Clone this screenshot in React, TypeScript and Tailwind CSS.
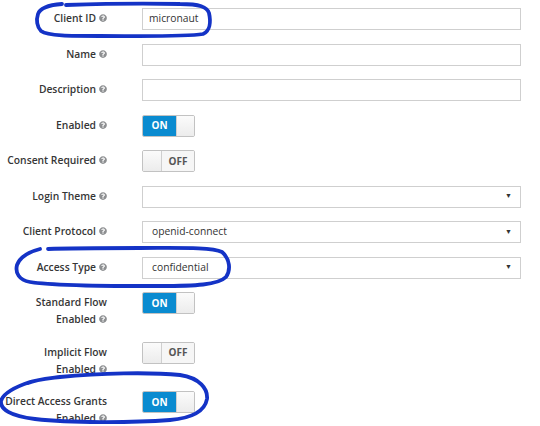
import { FaQuestionCircle } from 'react-icons/fa';

type Field =
  | { kind: 'text'; label: string; value?: string }
  | { kind: 'select'; label: string; value?: string }
  | { kind: 'toggle'; label: string; on: boolean; line2?: string };

const FIELDS: Field[] = [
  { kind: 'text', label: 'Client ID', value: 'micronaut' },
  { kind: 'text', label: 'Name' },
  { kind: 'text', label: 'Description' },
  { kind: 'toggle', label: 'Enabled', on: true },
  { kind: 'toggle', label: 'Consent Required', on: false },
  { kind: 'select', label: 'Login Theme' },
  { kind: 'select', label: 'Client Protocol', value: 'openid-connect' },
  { kind: 'select', label: 'Access Type', value: 'confidential' },
  { kind: 'toggle', label: 'Standard Flow', line2: 'Enabled', on: true },
  { kind: 'toggle', label: 'Implicit Flow', line2: 'Enabled', on: false },
  { kind: 'toggle', label: 'Direct Access Grants', line2: 'Enabled', on: true },
];

function Help() {
  return <FaQuestionCircle className="inline-block ml-[3px] -mt-[2px] w-[8px] h-[8px] text-[#8d8f91] align-middle" />;
}

function Toggle({ on }: { on: boolean }) {
  return (
    <div className="flex w-[53px] h-[22px] border border-[#c2c2c2] rounded-[2px] overflow-hidden text-[10px] font-bold">
      {on ? (
        <>
          <div className="w-[33px] bg-[#0a8bd0] text-white flex items-center justify-center">ON</div>
          <div className="flex-1 bg-gradient-to-b from-[#fbfbfb] to-[#ececec] border-l border-[#cfcfcf]" />
        </>
      ) : (
        <>
          <div className="w-[19px] bg-gradient-to-b from-[#fbfbfb] to-[#ececec] border-r border-[#cfcfcf]" />
          <div className="flex-1 bg-[#f6f6f6] text-[#555] flex items-center justify-center">OFF</div>
        </>
      )}
    </div>
  );
}

export default function App() {
  return (
    <div
      className="relative w-[540px] h-[426px] overflow-hidden bg-white text-[10.3px] text-[#363636]"
      style={{ fontFamily: '"Open Sans", "Liberation Sans", sans-serif' }}
    >
      <div className="pt-[8px] pr-[19px] flex flex-col gap-[13.5px]">
        {FIELDS.map((f) => (
          <div key={f.label} className="flex items-start">
            <div className="w-[108px] pr-[1px] pt-[2px] text-right font-semibold leading-[17px] shrink-0">
              {f.kind === 'toggle' && f.line2 ? (
                <>
                  <div className="whitespace-nowrap">{f.label}</div>
                  <div>
                    {f.line2}
                    <Help />
                  </div>
                </>
              ) : (
                <div className="whitespace-nowrap">
                  {f.label}
                  <Help />
                </div>
              )}
            </div>
            <div className="ml-[34px] flex-1">
              {f.kind === 'text' && (
                <div className="h-[22px] border border-[#cfcfcf] pl-[6px] flex items-center text-[#333]">
                  {f.value}
                </div>
              )}
              {f.kind === 'select' && (
                <div className="h-[22px] border border-[#cfcfcf] pl-[9px] pr-[8px] flex items-center justify-between text-[#333]">
                  <span>{f.value}</span>
                  <span className="text-[7px] text-[#333]">▼</span>
                </div>
              )}
              {f.kind === 'toggle' && <Toggle on={f.on} />}
            </div>
          </div>
        ))}
      </div>

      {/* hand drawn marker circles */}
      <svg className="absolute inset-0 pointer-events-none" width="540" height="426" viewBox="0 0 540 426" fill="none">
        <g stroke="#1433c6" strokeWidth="3.8" strokeLinecap="round" strokeLinejoin="round">
          <path d="M62 4 C48 5 40 8 38 14 C36 20 37 27 41 31 C48 36 70 36 100 36 C140 36 185 37 203 34 C210 31 211 22 209 13 C207 7 200 4 180 4 C140 3 95 4 66 5" />
          <path d="M40 249 C28 252 20 257 17 265 C15 273 19 280 30 282 C55 286 110 286 160 286 C195 286 218 285 226 277 C231 270 230 259 222 252 C212 247 180 248 140 248 C100 248 70 248 48 249" />
          <path d="M30 382 C15 387 3 394 1 401 C0 409 10 416 35 419 C70 423 130 423 170 420 C193 418 205 410 207 399 C208 389 200 378 180 375 C150 372 100 373 60 377 C45 379 35 380 28 383" />
        </g>
      </svg>
    </div>
  );
}
